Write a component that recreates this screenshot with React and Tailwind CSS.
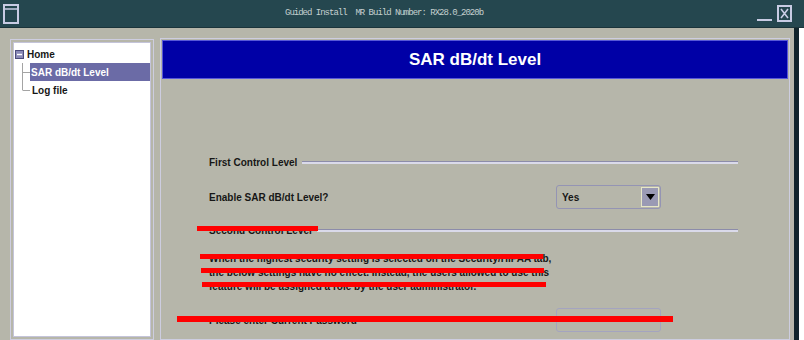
import React from 'react';

// Guided Install – SAR dB/dt Level page

const SANS = { fontFamily: '"Liberation Sans", Arial, sans-serif' };
const MONO = { fontFamily: '"Liberation Mono", "DejaVu Sans Mono", monospace' };

function WindowIcon() {
  return (
    <svg width="16" height="20" viewBox="0 0 16 20">
      <rect x="1" y="1" width="14" height="18" fill="none" stroke="#c8cce4" strokeWidth="2" />
      <line x1="1" y1="5" x2="15" y2="5" stroke="#c8cce4" strokeWidth="1.5" />
    </svg>
  );
}

function TreeLines({ last }) {
  return (
    <svg width="16" height="18" viewBox="0 0 16 18" className="shrink-0">
      <line x1="8.5" y1="0" x2="8.5" y2={last ? 9 : 18} stroke="#a4a4a4" strokeWidth="1" />
      <line x1="8.5" y1="9.5" x2="16" y2="9.5" stroke="#a4a4a4" strokeWidth="1" />
    </svg>
  );
}

function Separator() {
  return <div className="flex-1 h-[3px] border-t border-[#8c8caa] bg-[#dadaea]" />;
}

function RedBar({ className }) {
  return <div className={`absolute bg-[#ff0000] ${className}`} />;
}

export default function App() {
  return (
    <div className="relative w-[804px] h-[340px] overflow-hidden bg-[#b6b6aa] text-[#161616]" style={SANS}>
      {/* title bar */}
      <div className="flex items-center h-[28px] bg-[#25474f] border-b border-[#1b343a]">
        <div className="ml-[3px]">
          <WindowIcon />
        </div>
        <div className="ml-[266px] text-[9px] text-[#c4d0d0] tracking-[-1px]" style={MONO}>
          Guided Install&nbsp;&nbsp;MR Build Number: RX28.0_2020b
        </div>
        <div className="ml-auto mr-[12px] flex items-end gap-[5px]">
          <div className="w-[15px] h-[2px] bg-[#c8cce4] mb-[1px]" />
          <div className="w-[15px] h-[17px] border-2 border-[#c8cce4] flex items-center justify-center">
            <svg width="9" height="11" viewBox="0 0 9 11">
              <path d="M1 1 L8 10 M8 1 L1 10" stroke="#c8cce4" strokeWidth="1.6" />
            </svg>
          </div>
        </div>
      </div>

      {/* body */}
      <div className="flex h-[312px]">
        {/* tree frame */}
        <div className="ml-[10px] mt-[11px] w-[144px] border border-[#cdcde0] p-[2px] flex">
          <div className="flex-1 bg-white border border-[#c4c4da] pt-[2px] text-[10px] font-bold">
            <div className="flex items-center h-[18px] pl-[1px]">
              <svg width="9" height="9" viewBox="0 0 9 9" className="shrink-0">
                <rect x="0.5" y="0.5" width="8" height="8" fill="#8a8ab8" stroke="#4c4c7c" />
                <line x1="2" y1="4.5" x2="7" y2="4.5" stroke="#ffffff" strokeWidth="1.4" />
              </svg>
              <span className="ml-[3px]">Home</span>
            </div>
            <div className="flex items-center h-[18px]">
              <TreeLines />
              <div className="flex-1 h-full flex items-center bg-[#6b6ba6] text-white pl-[1px]">SAR dB/dt Level</div>
            </div>
            <div className="flex items-center h-[18px]">
              <TreeLines last />
              <span className="pl-[2px]">Log file</span>
            </div>
          </div>
        </div>

        {/* content panel */}
        <div className="ml-[6px] mt-[10px] w-[630px] border border-[#cdcde0] p-[1px] flex flex-col">
          <div className="h-[39px] bg-[#0000a6] border border-[#5858d8] flex items-center justify-center text-white text-[17px] font-bold">
            SAR dB/dt Level
          </div>
          <div className="pl-[47px] pr-[50px] text-[10px] font-bold">
            <div className="mt-[77px] flex items-center h-[12px]">
              <span className="mr-[5px]">First Control Level</span>
              <Separator />
            </div>
            <div className="mt-[17px] flex items-center h-[24px]">
              <span className="w-[347px]">Enable SAR dB/dt Level?</span>
              <div className="w-[105px] h-[24px] rounded-[3px] border border-[#9494b4] flex items-center justify-between pl-[5px] pr-[1px]">
                <span>Yes</span>
                <div className="w-[18px] h-[20px] bg-[#9a9ab4] border border-[#e6e6c8] flex items-center justify-center">
                  <svg width="9" height="6" viewBox="0 0 9 6">
                    <path d="M0 0 H9 L4.5 6 Z" fill="#000" />
                  </svg>
                </div>
              </div>
            </div>
            <div className="mt-[15px] flex items-center h-[12px]">
              <span className="mr-[5px]">Second Control Level</span>
              <Separator />
            </div>
            <div className="mt-[16px] leading-[14px]">
              <div>When the highest security setting is selected on the Security/HIPAA tab,</div>
              <div>the below settings have no effect. Instead, the users allowed to use this</div>
              <div>feature will be assigned a role by the user administrator.</div>
            </div>
            <div className="mt-[14px] flex items-center h-[24px]">
              <span className="w-[347px]">Please enter Current Password</span>
              <div className="w-[105px] h-[24px] rounded-[3px] border border-[#a4a4c0]" />
            </div>
          </div>
        </div>

        <div className="ml-[4px] w-[5px] bg-[#10232a]" />
        <div className="flex-1 bg-white" />
      </div>

      {/* redactions */}
      <RedBar className="left-[197px] top-[226px] w-[121px] h-[5px]" />
      <RedBar className="left-[200px] top-[254px] w-[343px] h-[5px]" />
      <RedBar className="left-[201px] top-[268px] w-[343px] h-[5px]" />
      <RedBar className="left-[202px] top-[282px] w-[344px] h-[5px]" />
      <RedBar className="left-[177px] top-[316px] w-[496px] h-[6px]" />
    </div>
  );
}
